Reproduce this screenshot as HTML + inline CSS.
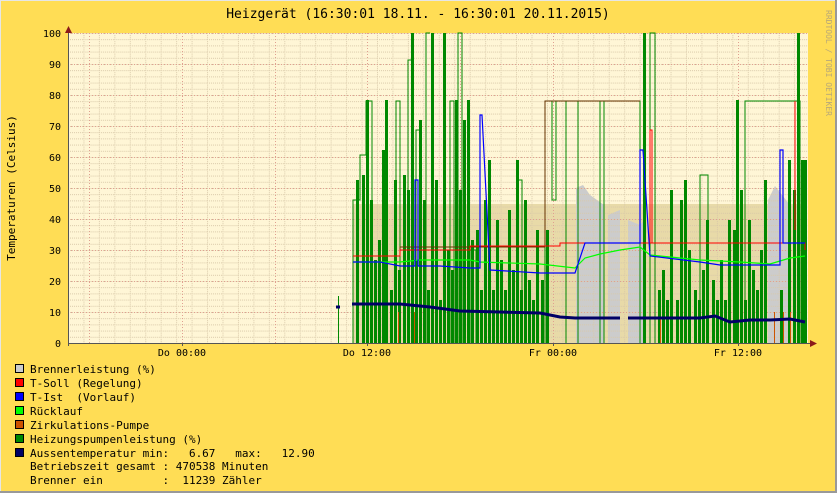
<!DOCTYPE html>
<html><head><meta charset="utf-8"><style>
html,body{margin:0;padding:0;}
body{width:837px;height:493px;overflow:hidden;background:#FFDD55;}
svg{display:block;}
text{font-family:"DejaVu Sans Mono","Liberation Mono",monospace;fill:#000;}
</style></head><body>
<svg width="837" height="493" viewBox="0 0 837 493" xmlns="http://www.w3.org/2000/svg">
<defs>
<pattern id="mh" width="15.45" height="6.2" patternUnits="userSpaceOnUse" x="68" y="33">
<line x1="0" y1="0.5" x2="15.45" y2="0.5" stroke="#d8c8a8" stroke-width="1" stroke-dasharray="1,1"/>
<line x1="0.5" y1="0" x2="0.5" y2="6.2" stroke="#d8c8a8" stroke-width="1" stroke-dasharray="1,1"/>
</pattern>
</defs>
<rect x="0" y="0" width="837" height="493" fill="#FFDD55"/>
<line x1="0" y1="0.5" x2="837" y2="0.5" stroke="#e6e6e6"/>
<line x1="0.5" y1="0" x2="0.5" y2="493" stroke="#e6e6e6"/>
<line x1="0" y1="492" x2="837" y2="492" stroke="#999" stroke-width="2"/>
<line x1="836" y1="0" x2="836" y2="493" stroke="#999" stroke-width="2"/>
<rect x="68" y="33" width="740" height="310" fill="#FFF6D6"/>
<rect x="353" y="204" width="452" height="139" fill="#E8DAA8"/>
<path d="M576 343 V188 L583 185 L590 195 L597 200 L604 205 V343 Z M608 343 V215 L620 210 V343 Z M628 343 V220 L640 225 L646 218 V343 Z M768 343 V200 L775 186 L782 195 L790 205 V343 Z" fill="#cccccc"/>
<rect x="68" y="33" width="740" height="310" fill="url(#mh)"/>
<g stroke="#e0a090" stroke-dasharray="1,2" stroke-width="1">
<line x1="68" y1="33.5" x2="808" y2="33.5"/><line x1="68" y1="64.5" x2="808" y2="64.5"/><line x1="68" y1="95.5" x2="808" y2="95.5"/><line x1="68" y1="126.5" x2="808" y2="126.5"/><line x1="68" y1="157.5" x2="808" y2="157.5"/><line x1="68" y1="188.5" x2="808" y2="188.5"/><line x1="68" y1="219.5" x2="808" y2="219.5"/><line x1="68" y1="250.5" x2="808" y2="250.5"/><line x1="68" y1="281.5" x2="808" y2="281.5"/><line x1="68" y1="312.5" x2="808" y2="312.5"/>
<line x1="89.5" y1="33" x2="89.5" y2="343"/><line x1="182.5" y1="33" x2="182.5" y2="343"/><line x1="275.5" y1="33" x2="275.5" y2="343"/><line x1="367.5" y1="33" x2="367.5" y2="343"/><line x1="460.5" y1="33" x2="460.5" y2="343"/><line x1="553.5" y1="33" x2="553.5" y2="343"/><line x1="645.5" y1="33" x2="645.5" y2="343"/><line x1="738.5" y1="33" x2="738.5" y2="343"/>
</g>
<g fill="#008800">
<rect x="338" y="296" width="1" height="47"/>
<rect x="356" y="180" width="3" height="163"/><rect x="362" y="175" width="3" height="168"/><rect x="366" y="100" width="3" height="243"/><rect x="370" y="200" width="3" height="143"/><rect x="374" y="260" width="3" height="83"/><rect x="378" y="240" width="3" height="103"/><rect x="382" y="150" width="3" height="193"/><rect x="385" y="100" width="3" height="243"/><rect x="390" y="290" width="3" height="53"/><rect x="394" y="180" width="3" height="163"/><rect x="398" y="270" width="3" height="73"/><rect x="403" y="175" width="3" height="168"/><rect x="407" y="190" width="3" height="153"/><rect x="411" y="33" width="3" height="310"/><rect x="415" y="260" width="3" height="83"/><rect x="419" y="120" width="3" height="223"/><rect x="423" y="200" width="3" height="143"/><rect x="427" y="290" width="3" height="53"/><rect x="431" y="33" width="3" height="310"/><rect x="435" y="180" width="3" height="163"/><rect x="439" y="300" width="3" height="43"/><rect x="443" y="33" width="3" height="310"/><rect x="447" y="250" width="3" height="93"/><rect x="451" y="270" width="3" height="73"/><rect x="455" y="100" width="3" height="243"/><rect x="459" y="190" width="3" height="153"/><rect x="463" y="120" width="3" height="223"/><rect x="467" y="100" width="3" height="243"/><rect x="471" y="240" width="3" height="103"/><rect x="476" y="230" width="3" height="113"/><rect x="480" y="290" width="3" height="53"/><rect x="484" y="200" width="3" height="143"/><rect x="488" y="160" width="3" height="183"/><rect x="492" y="290" width="3" height="53"/><rect x="496" y="220" width="3" height="123"/><rect x="500" y="260" width="3" height="83"/><rect x="504" y="290" width="3" height="53"/><rect x="508" y="210" width="3" height="133"/><rect x="512" y="270" width="3" height="73"/><rect x="516" y="160" width="3" height="183"/><rect x="520" y="290" width="3" height="53"/><rect x="524" y="200" width="3" height="143"/><rect x="528" y="280" width="3" height="63"/><rect x="532" y="300" width="3" height="43"/><rect x="536" y="230" width="3" height="113"/><rect x="541" y="280" width="3" height="63"/><rect x="546" y="230" width="3" height="113"/>
<rect x="643" y="33" width="3" height="310"/><rect x="658" y="290" width="3" height="53"/><rect x="662" y="270" width="3" height="73"/><rect x="666" y="300" width="3" height="43"/><rect x="670" y="190" width="3" height="153"/><rect x="676" y="300" width="3" height="43"/><rect x="680" y="200" width="3" height="143"/><rect x="684" y="180" width="3" height="163"/><rect x="688" y="250" width="3" height="93"/><rect x="694" y="290" width="3" height="53"/><rect x="698" y="300" width="3" height="43"/><rect x="702" y="270" width="3" height="73"/><rect x="706" y="220" width="3" height="123"/><rect x="712" y="280" width="3" height="63"/><rect x="716" y="300" width="3" height="43"/><rect x="720" y="260" width="3" height="83"/><rect x="724" y="300" width="3" height="43"/><rect x="728" y="220" width="3" height="123"/><rect x="733" y="230" width="3" height="113"/><rect x="736" y="100" width="3" height="243"/><rect x="740" y="190" width="3" height="153"/><rect x="744" y="300" width="3" height="43"/><rect x="748" y="220" width="3" height="123"/><rect x="752" y="270" width="3" height="73"/><rect x="756" y="290" width="3" height="53"/><rect x="760" y="250" width="3" height="93"/><rect x="764" y="180" width="3" height="163"/><rect x="780" y="290" width="3" height="53"/><rect x="788" y="160" width="3" height="183"/><rect x="793" y="190" width="3" height="153"/><rect x="797" y="33" width="3" height="310"/><rect x="801" y="160" width="3" height="183"/><rect x="804" y="160" width="3" height="183"/>
</g>
<g stroke="#cc5500" stroke-width="1">
<line x1="398.5" y1="312" x2="398.5" y2="343"/><line x1="414.5" y1="312" x2="414.5" y2="343"/><line x1="660.5" y1="318" x2="660.5" y2="343"/><line x1="774.5" y1="312" x2="774.5" y2="343"/><line x1="783.5" y1="312" x2="783.5" y2="343"/><line x1="790.5" y1="312" x2="790.5" y2="343"/>
</g>
<path d="M353 343 V200 H360 V155 H366 V101 H372 V343 M396 343 V101 H400 V343 M408 343 V60 H412 M416 343 V130 H420 V343 M426 343 V33 H430 M450 343 V101 H454 V343 M458 343 V33 H462 V343 M470 343 V250 H476 V343 M518 343 V180 H522 V343 M545 343 V101 H552 V200 H556 V101 H566 V343 M578 343 V101 H600 V343 M604 343 V101 H640 V343 M650 343 V33 H655 V343 M700 343 V175 H708 V343 M745 343 V101 H800 V343" fill="none" stroke="#008800" stroke-width="1"/>
<path d="M353 256 H400 V247 H545 V101 H640" fill="none" stroke="#663300" stroke-width="1"/>
<path d="M353 256 H400 V250 H470 V246 H560 V243 H650 V243 H805 V250 M650 243 V130 H652 V243 M795 101 V230" fill="none" stroke="#ff0000" stroke-width="1"/>
<path d="M353 262 H400 L420 260 H470 L480 262 L540 264 L575 268 L585 258 L600 254 L620 250 L640 247 L650 255 L680 258 L700 260 L740 262 L770 264 L790 258 L805 256" fill="none" stroke="#00ff00" stroke-width="1.2"/>
<path d="M353 262 H380 L400 266 H415 V180 H418 V266 H440 L470 268 L480 268 V115 H482 L490 270 L540 273 H575 L585 243 H640 V150 H643 L650 256 L700 262 L720 265 H780 V150 H783 V243 H805" fill="none" stroke="#0000ff" stroke-width="1.2"/>
<path d="M336 307 H340 M352 304 H400 L430 307 L460 311 L500 312 L540 313 L560 317 L575 318 H620 M628 318 H700 L715 316 L730 322 L750 320 L770 320 L790 319 L805 322" fill="none" stroke="#000066" stroke-width="3"/>
<line x1="68" y1="343.5" x2="810" y2="343.5" stroke="#555" stroke-width="1"/>
<line x1="68.5" y1="30" x2="68.5" y2="346" stroke="#555" stroke-width="1"/>
<path d="M65 33 L68.5 26 L72 33 Z" fill="#8B1A1A"/>
<path d="M810 340 L817 343.5 L810 347 Z" fill="#8B1A1A"/>
<g stroke="#555"><line x1="182.5" y1="343" x2="182.5" y2="346"/><line x1="367.5" y1="343" x2="367.5" y2="346"/><line x1="553.5" y1="343" x2="553.5" y2="346"/><line x1="738.5" y1="343" x2="738.5" y2="346"/></g>
<text x="418" y="18" font-size="13" text-anchor="middle">Heizgerät (16:30:01 18.11. - 16:30:01 20.11.2015)</text>
<text transform="translate(826,10) rotate(90)" font-size="8" style="fill:#b8a878">RRDTOOL / TOBI OETIKER</text>
<text transform="translate(15,188) rotate(-90)" font-size="11" text-anchor="middle">Temperaturen (Celsius)</text>
<g font-size="10" text-anchor="end">
<text x="61" y="37">100</text><text x="61" y="68">90</text><text x="61" y="99">80</text><text x="61" y="130">70</text><text x="61" y="161">60</text><text x="61" y="192">50</text><text x="61" y="223">40</text><text x="61" y="254">30</text><text x="61" y="285">20</text><text x="61" y="316">10</text><text x="61" y="347">0</text>
</g>
<g font-size="10" text-anchor="middle">
<text x="182" y="356">Do 00:00</text><text x="367" y="356">Do 12:00</text><text x="553" y="356">Fr 00:00</text><text x="738" y="356">Fr 12:00</text>
</g>
<g stroke="#000" stroke-width="1">
<rect x="15.5" y="364.5" width="8" height="8" fill="#cccccc"/>
<rect x="15.5" y="378.5" width="8" height="8" fill="#ff0000"/>
<rect x="15.5" y="392.5" width="8" height="8" fill="#0000ff"/>
<rect x="15.5" y="406.5" width="8" height="8" fill="#00ff00"/>
<rect x="15.5" y="420.5" width="8" height="8" fill="#cc5500"/>
<rect x="15.5" y="434.5" width="8" height="8" fill="#008800"/>
<rect x="15.5" y="448.5" width="8" height="8" fill="#000066"/>
</g>
<g font-size="11" style="white-space:pre">
<text x="30" y="373" xml:space="preserve">Brennerleistung (%)</text>
<text x="30" y="387" xml:space="preserve">T-Soll (Regelung)</text>
<text x="30" y="401" xml:space="preserve">T-Ist  (Vorlauf)</text>
<text x="30" y="415" xml:space="preserve">Rücklauf</text>
<text x="30" y="429" xml:space="preserve">Zirkulations-Pumpe</text>
<text x="30" y="443" xml:space="preserve">Heizungspumpenleistung (%)</text>
<text x="30" y="457" xml:space="preserve">Aussentemperatur min:   6.67   max:   12.90</text>
<text x="30" y="470" xml:space="preserve">Betriebszeit gesamt : 470538 Minuten</text>
<text x="30" y="484" xml:space="preserve">Brenner ein         :  11239 Zähler</text>
</g>
</svg>
</body></html>
